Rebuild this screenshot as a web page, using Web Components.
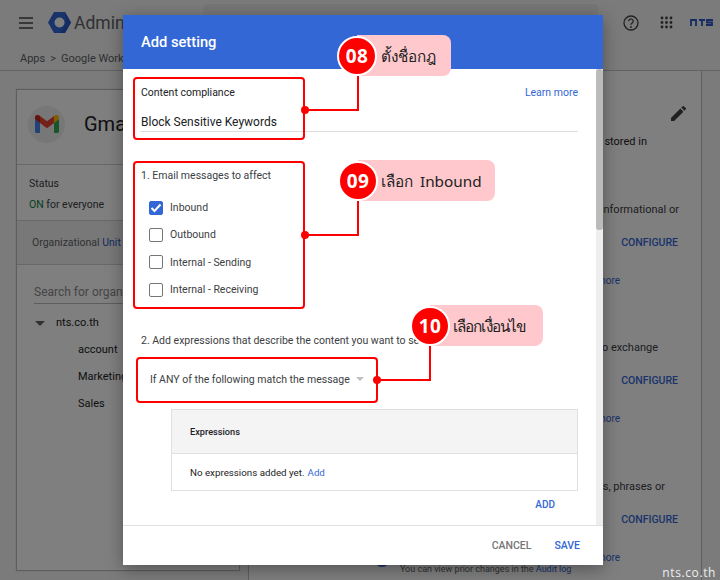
<!DOCTYPE html>
<html lang="th">
<head>
<meta charset="utf-8">
<title>Add setting</title>
<style>
  html, body { margin: 0; padding: 0; }
  body { width: 720px; height: 580px; overflow: hidden; position: relative; font-family: Roboto, "Noto Sans", sans-serif; color: #202124; }
</style>
</head>
<body>
<admin-page></admin-page>
<settings-dialog></settings-dialog>

<red-box style="left:133px;top:77px;width:168px;height:59px"></red-box>
<red-box style="left:133px;top:161px;width:168px;height:144px"></red-box>
<red-box style="left:136px;top:357px;width:238px;height:42px"></red-box>

<step-callout num="08" style="left:337px;top:35px;width:114px">ตั้งชื่อกฎ</step-callout>
<step-callout num="09" spaced style="left:338px;top:160px;width:157px">เลือก Inbound</step-callout>
<step-callout num="10" tight style="left:410px;top:305px;width:133px">เลือกเงื่อนไข</step-callout>

<script>
class AdminPage extends HTMLElement {
  constructor() {
    super();
    this.attachShadow({ mode: 'open' });
    this.shadowRoot.innerHTML = /*html*/`
      <style>
        :host { display: block; width: 720px; height: 580px; background: #f6f6f6; position: relative; overflow: hidden; font-size: 11px; }
        .top { height: 45px; display: flex; align-items: center; background: #f6f6f6; padding: 0 7px 0 18px; }
        .admin { font-size: 17.500px; color: #5f6368; margin-left: 3px; }
        .logo { margin-left: 14px; }
        .search { width: 395px; height: 38px; margin: 4px 0 0 78px; background: #ededed; border-radius: 3px; align-self: flex-start; }
        .top-right { margin-left: auto; display: flex; align-items: center; gap: 17px; }
        .help { margin-right: 4px; }
        .crumbs { height: 24px; padding: 1px 0 0 20px; border-bottom: 1px solid #c6c6c6; display: flex; gap: 5px; align-items: center; color: #5f6368; font-size: 11px; }
        .main { display: flex; }
        .left { width: 222px; height: 480px; margin: 19px 0 0 17px; background: #fff; box-shadow: 0 0 1px 1px #bdbdbd; flex: none; }
        .app { height: 75px; display: flex; align-items: center; box-sizing: border-box; padding: 0 0 6px 11px; gap: 19px; border-bottom: 1px solid #d0d0d0; }
        .circle { width: 37px; height: 37px; border-radius: 50%; background: #eee; display: flex; align-items: center; justify-content: center; }
        .gma { font-size: 20px; }
        .status { height: 56px; padding: 8px 0 0 12px; box-sizing: border-box; border-bottom: 1px solid #d0d0d0; line-height: 21px; color: #3c4043; font-size: 10.500px; }
        .on { color: #0b8043; }
        .ou { height: 43px; display: flex; align-items: center; padding-left: 15px; background: #f1f1f1; border-bottom: 1px solid #d0d0d0; color: #5f6368; font-size: 10.500px; }
        .ou b { font-weight: 400; color: #2a56c6; }
        .find { margin: 17px 0 0 17px; height: 21px; border-bottom: 1px solid #bbb; color: #8a8a8a; font-size: 12px; line-height: 20px; white-space: nowrap; }
        .tree { display: grid; grid-auto-rows: 27px; align-items: center; margin-top: 5px; color: #202124; }
        .tree .root { padding-left: 39px; position: relative; }
        .tree .root::before { content: ""; position: absolute; left: 18px; top: 5px; border: 5px solid transparent; border-top-color: #5f6368; border-bottom: 0; }
        .tree .kid { padding-left: 61px; }
        .right { margin-left: 9px; width: 452px; height: 510px; border-right: 1px solid #c0c0c0; border-left: 1px solid #c0c0c0; background: #fff; position: relative; flex: none; color: #3c4043; }
        .rows { display: flex; flex-direction: column; align-items: flex-end; padding-right: 22px; }
        .pencil { margin: 35px 0 0 0; position: relative; right: -7px; }
        .t1 { color: #202124; margin: 14px 32px 0 0; height: 13px; line-height: 13px; }
        .t { height: 13px; line-height: 13px; }
        .cfg { font-weight: 500; font-size: 10.500px; color: #3367d6; height: 14px; line-height: 14px; margin: 20px 1px 0 0; }
        .more { color: #3367d6; font-size: 10px; height: 12px; line-height: 12px; margin: 25px 59px 0 0; }
        .audit { position: absolute; left: 151px; top: 492px; font-size: 9px; line-height: 12px; color: #5f6368; white-space: nowrap; }
        .audit b { font-weight: 400; color: #3367d6; }
        .dot { position: absolute; left: 125px; top: 480px; width: 16px; height: 16px; border-radius: 50%; background: #3367d6; }
        .scrim { position: absolute; inset: 0; background: rgba(0,0,0,.5); }
        .mark { position: absolute; right: 4px; bottom: -1px; font: 12px "Open Sans", sans-serif; letter-spacing: .6px; color: #eee; z-index: 1; }
      </style>
      <div class="top">
        <svg width="16" height="12" viewBox="0 0 16 12"><path d="M1 1h14M1 6h14M1 11h14" stroke="#444" stroke-width="1.6"/></svg>
        <svg class="logo" width="23" height="21" viewBox="0 0 23 21"><path d="M6 0h11l6 10.500-6 10.500H6L0 10.500z" fill="#3367d6"/><path d="M17 0l6 10.500-6 10.500h-5l6-10z" fill="#2a56c6"/><circle cx="11.500" cy="10.500" r="5" fill="#fff"/></svg>
        <span class="admin">Admin</span>
        <div class="search"></div>
        <div class="top-right">
          <svg class="help" width="16" height="16" viewBox="0 0 16 16"><circle cx="8" cy="8" r="7" fill="none" stroke="#444" stroke-width="1.300"/><path d="M5.800 6.200a2.200 2.200 0 1 1 3.400 1.800c-.8.500-1.200.9-1.200 1.800" fill="none" stroke="#444" stroke-width="1.300"/><circle cx="8" cy="12" r=".9" fill="#444"/></svg>
          <svg width="13" height="13" viewBox="0 0 13 13" fill="#444"><circle cx="2" cy="2" r="1.400"/><circle cx="6.500" cy="2" r="1.400"/><circle cx="11" cy="2" r="1.400"/><circle cx="2" cy="6.500" r="1.400"/><circle cx="6.500" cy="6.500" r="1.400"/><circle cx="11" cy="6.500" r="1.400"/><circle cx="2" cy="11" r="1.400"/><circle cx="6.500" cy="11" r="1.400"/><circle cx="11" cy="11" r="1.400"/></svg>
          <svg width="23" height="7" viewBox="0 0 23 7" fill="none" stroke="#2a56c6" stroke-width="1.800"><path d="M1 7V1h5v6M9 1h6M12 1v6M23 1h-6v2.500h5V6h-6"/></svg>
        </div>
      </div>
      <div class="crumbs"><span>Apps</span><span>&gt;</span><span>Google Work</span></div>
      <div class="main">
        <div class="left">
          <div class="app">
            <div class="circle">
              <svg width="24" height="18" viewBox="0 0 24 18"><path d="M0 4v12.500A1.500 1.500 0 0 0 1.500 18H5V7z" fill="#4285f4"/><path d="M24 4v12.500a1.500 1.500 0 0 1-1.500 1.500H19V7z" fill="#34a853"/><path d="M19 1v7l5-3.700V2.500C24 .3 21.500-.8 19.800.5z" fill="#fbbc04"/><path d="M5 8V1l7 5.300L19 1v7l-7 5.200z" fill="#ea4335"/><path d="M0 2.500v1.800l5 3.700V1L4.200.5C2.500-.8 0 .3 0 2.500z" fill="#c5221f"/></svg>
            </div>
            <span class="gma">Gma</span>
          </div>
          <div class="status">Status<br><span class="on">ON</span> for everyone</div>
          <div class="ou"><span>Organizational <b>Unit</b></span></div>
          <div class="find">Search for organ</div>
          <div class="tree">
            <div class="root">nts.co.th</div>
            <div class="kid">account</div>
            <div class="kid">Marketing</div>
            <div class="kid">Sales</div>
          </div>
        </div>
        <div class="right">
          <div class="rows">
            <svg class="pencil" width="15" height="15" viewBox="0 0 16 16"><path d="M0 16v-3.300L10 2.700l3.300 3.300L3.300 16zM11 1.700L12.300.4a1.200 1.200 0 0 1 1.700 0l1.600 1.600a1.200 1.200 0 0 1 0 1.700L14.300 5z" fill="#3c4043"/></svg>
            <div class="t1">stored in</div>
            <div class="t" style="margin-top:55px">informational or</div>
            <div class="cfg">CONFIGURE</div>
            <div class="more">more</div>
            <div class="t" style="margin:54px 21px 0 0">to exchange</div>
            <div class="cfg">CONFIGURE</div>
            <div class="more">more</div>
            <div class="t" style="margin:55px 14px 0 0">ds, phrases or</div>
            <div class="cfg">CONFIGURE</div>
            <div class="more">more</div>
          </div>
          <div class="dot"></div>
          <div class="audit">You can view prior changes in the <b>Audit log</b></div>
        </div>
      </div>
      <div class="scrim"></div>
      <div class="mark">nts.co.th</div>
    `;
  }
}
customElements.define('admin-page', AdminPage);

class CheckRow extends HTMLElement {
  constructor() {
    super();
    this.attachShadow({ mode: 'open' });
    const on = this.hasAttribute('checked');
    this.shadowRoot.innerHTML = /*html*/`
      <style>
        :host { display: flex; align-items: center; gap: 7px; height: 27.330px; font-size: 10.500px; color: #3c4043; }
        .box { width: 14px; height: 14px; box-sizing: border-box; border-radius: 2px; border: 1px solid #757575; background: #fff; display: block; }
        .box.on { background: #3367d6; border-color: #3367d6; }
      </style>
      <span class="box ${on ? 'on' : ''}">
        ${on ? '<svg width="12" height="12" viewBox="0 0 12 12" style="display:block"><path d="M1.500 6l3 3 6-6.500" fill="none" stroke="#fff" stroke-width="2"/></svg>' : ''}
      </span>
      <slot></slot>
    `;
  }
}
customElements.define('check-row', CheckRow);

class SettingsDialog extends HTMLElement {
  constructor() {
    super();
    this.attachShadow({ mode: 'open' });
    this.shadowRoot.innerHTML = /*html*/`
      <style>
        :host { display: flex; flex-direction: column; position: absolute; left: 123px; top: 15px; width: 480px; height: 550px; background: #fff; box-shadow: 0 4px 16px rgba(0,0,0,.35); font-size: 10.500px; color: #202124; }
        header { height: 54px; flex: none; background: #3367d6; color: #fff; font-size: 14.700px; font-weight: 500; display: flex; align-items: center; padding-left: 18px; }
        .mid { height: 456px; flex: none; display: flex; border-bottom: 1px solid #e0e0e0; }
        .content { width: 473px; box-sizing: border-box; padding: 0 18px; }
        .track { width: 7px; background: #eee; }
        .thumb { height: 161px; background: #bbb; border-radius: 3px; }
        .name { height: 63px; padding-top: 17px; box-sizing: border-box; border-bottom: 1px solid #ddd; }
        .name-top { display: flex; justify-content: space-between; height: 14px; line-height: 14px; }
        .name-top a { color: #3367d6; }
        .name-val { font-size: 12px; line-height: 14px; margin-top: 15px; color: #202124; }
        .sec1 { margin-top: 37px; line-height: 14px; color: #3c4043; }
        .checks { margin: 11px 0 0 8px; }
        .sec2 { margin-top: 31px; line-height: 14px; color: #3c4043; white-space: nowrap; }
        .select { height: 46px; margin-top: 8px; display: flex; align-items: center; gap: 6px; padding-left: 9px; color: #3c4043; }
        .select i { border: 4.500px solid transparent; border-top-color: #bdbdbd; border-bottom: 0; }
        .table { margin: 7px 0 0 30px; border: 1px solid #e0e0e0; }
        .thead { height: 43px; background: #f4f4f4; border-bottom: 1px solid #e0e0e0; display: flex; align-items: center; padding-left: 18px; font-size: 9.200px; font-weight: 500; color: #202124; }
        .tbody { height: 36px; display: flex; align-items: center; padding-left: 18px; font-size: 9.750px; color: #202124; gap: 3px; }
        .tbody a { color: #3367d6; }
        .add { text-align: right; padding-right: 23px; margin-top: 7px; font-weight: 500; font-size: 10px; color: #3367d6; line-height: 14px; }
        footer { flex: 1; display: flex; justify-content: flex-end; align-items: center; gap: 23px; padding-right: 23px; font-weight: 500; font-size: 10.500px; }
        .cancel { color: #757575; }
        .save { color: #3367d6; }
      </style>
      <header>Add setting</header>
      <div class="mid">
        <div class="content">
          <div class="name">
            <div class="name-top"><span>Content compliance</span><a>Learn more</a></div>
            <div class="name-val">Block Sensitive Keywords</div>
          </div>
          <div class="sec1">1. Email messages to affect</div>
          <div class="checks">
            <check-row checked>Inbound</check-row>
            <check-row>Outbound</check-row>
            <check-row>Internal - Sending</check-row>
            <check-row>Internal - Receiving</check-row>
          </div>
          <div class="sec2">2. Add expressions that describe the content you want to se</div>
          <div class="select"><span>If ANY of the following match the message</span><i></i></div>
          <div class="table">
            <div class="thead">Expressions</div>
            <div class="tbody"><span>No expressions added yet.</span><a>Add</a></div>
          </div>
          <div class="add">ADD</div>
        </div>
        <div class="track"><div class="thumb"></div></div>
      </div>
      <footer><span class="cancel">CANCEL</span><span class="save">SAVE</span></footer>
    `;
  }
}
customElements.define('settings-dialog', SettingsDialog);

class RedBox extends HTMLElement {
  constructor() {
    super();
    this.attachShadow({ mode: 'open' });
    this.shadowRoot.innerHTML = /*html*/`
      <style>
        :host { display: block; position: absolute; border: 2px solid #f00; border-radius: 4px; }
      </style>
    `;
  }
}
customElements.define('red-box', RedBox);

class StepCallout extends HTMLElement {
  constructor() {
    super();
    this.attachShadow({ mode: 'open' });
    const tight = this.hasAttribute('tight');
    const spaced = this.hasAttribute('spaced');
    this.shadowRoot.innerHTML = /*html*/`
      <style>
        :host { display: flex; position: absolute; height: 41px; align-items: center; background: linear-gradient(to right, transparent 20px, #ffc8cd 20px); border-radius: 0 8px 8px 0; font: 15.300px "Noto Sans", sans-serif; color: #222; }
        .num { width: 40px; height: 40px; box-sizing: border-box; flex: none; border-radius: 50%; background: #f00; border: 2px solid #fff; color: #fff; font: 700 19px/36px "Open Sans", sans-serif; letter-spacing: .5px; text-align: center; }
        .txt { margin: 2px 0 0 ${this.getAttribute('num') === '08' ? 4 : 3}px; white-space: nowrap; letter-spacing: ${tight ? '-.9px' : '0'}; word-spacing: ${spaced ? '3px' : '0'}; }
      </style>
      <span class="num">${this.getAttribute('num')}</span>
      <span class="txt"><slot></slot></span>
    `;
  }
}
customElements.define('step-callout', StepCallout);

// connector lines between the callouts and their boxes
class LeadLine extends HTMLElement {
  constructor() {
    super();
    this.attachShadow({ mode: 'open' });
    this.shadowRoot.innerHTML = /*html*/`
      <style>
        :host { display: block; position: absolute; border: solid #f00; border-width: 0 2px 2px 0; box-sizing: border-box; }
        i { position: absolute; left: -4px; bottom: -5px; width: 8px; height: 8px; border-radius: 50%; background: #f00; }
      </style>
      <i></i>
    `;
  }
}
customElements.define('lead-line', LeadLine);

[[305, 74, 54, 37], [305, 199, 54, 37], [377, 344, 54, 37]].forEach(([l, t, w, h]) => {
  const el = document.createElement('lead-line');
  el.style.cssText = `left:${l}px;top:${t}px;width:${w}px;height:${h}px`;
  document.body.insertBefore(el, document.querySelector('step-callout'));
});
</script>
</body>
</html>
